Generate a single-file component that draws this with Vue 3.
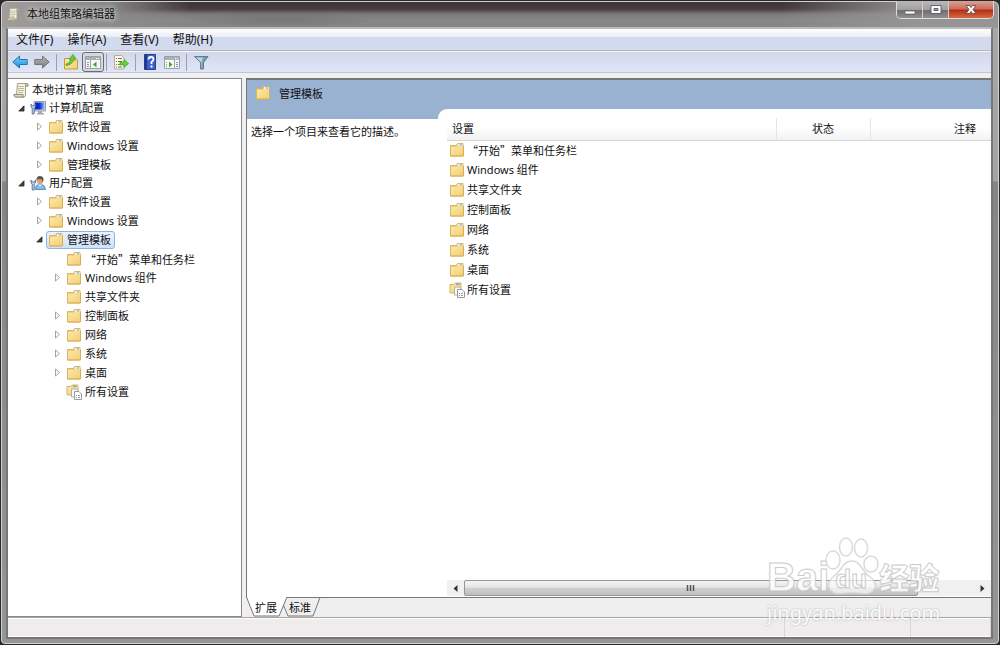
<script setup>
const menus = ['文件(F)', '操作(A)', '查看(V)', '帮助(H)']

const tree = [
  { text: '本地计算机 策略', level: 0, icon: 'scroll', arrow: 'none' },
  { text: '计算机配置', level: 1, icon: 'computer', arrow: 'open' },
  { text: '软件设置', level: 2, icon: 'folder', arrow: 'closed' },
  { text: 'Windows 设置', level: 2, icon: 'folder', arrow: 'closed' },
  { text: '管理模板', level: 2, icon: 'folder', arrow: 'closed' },
  { text: '用户配置', level: 1, icon: 'user', arrow: 'open' },
  { text: '软件设置', level: 2, icon: 'folder', arrow: 'closed' },
  { text: 'Windows 设置', level: 2, icon: 'folder', arrow: 'closed' },
  { text: '管理模板', level: 2, icon: 'folder', arrow: 'open', selected: true },
  { text: '“开始”菜单和任务栏', level: 3, icon: 'folder', arrow: '', quoted: true },
  { text: 'Windows 组件', level: 3, icon: 'folder', arrow: 'closed' },
  { text: '共享文件夹', level: 3, icon: 'folder', arrow: '' },
  { text: '控制面板', level: 3, icon: 'folder', arrow: 'closed' },
  { text: '网络', level: 3, icon: 'folder', arrow: 'closed' },
  { text: '系统', level: 3, icon: 'folder', arrow: 'closed' },
  { text: '桌面', level: 3, icon: 'folder', arrow: 'closed' },
  { text: '所有设置', level: 3, icon: 'all', arrow: '' },
]

const items = tree.filter((n) => n.level === 3)
</script>

<template>
  <svg class="defs" aria-hidden="true">
    <defs>
      <linearGradient id="gFolder" x1="0" y1="0" x2="1" y2="1">
        <stop offset="0" stop-color="#fde9a6" />
        <stop offset="1" stop-color="#f2cf78" />
      </linearGradient>
      <linearGradient id="gBlue" x1="0" y1="0" x2="0" y2="1">
        <stop offset="0" stop-color="#7fd4f8" />
        <stop offset="1" stop-color="#1b8fd8" />
      </linearGradient>
      <linearGradient id="gGrey" x1="0" y1="0" x2="0" y2="1">
        <stop offset="0" stop-color="#b5b5b5" />
        <stop offset="1" stop-color="#7c7c7c" />
      </linearGradient>
      <linearGradient id="gScreen" x1="0" y1="0" x2="1" y2="0">
        <stop offset="0" stop-color="#0a1cb8" />
        <stop offset=".5" stop-color="#1030d8" />
        <stop offset="1" stop-color="#8fc0f4" />
      </linearGradient>
      <symbol id="folder" viewBox="0 0 16 16">
        <path d="M1.500 3.500h6l1-2h5.500v12.500h-12.500z" fill="#f0cf7c" stroke="#d9b564" />
        <path d="M9 2h4.500v2H9z" fill="#fdf9ea" />
        <path d="M10.500 2.500h2.500v1h-2.500z" fill="#5aa2dc" />
        <path d="M2 5h6l1-1h5v9.500H2z" fill="url(#gFolder)" />
        <path d="M14.500 3.500v10.500H1.500" fill="none" stroke="#d8af59" />
      </symbol>
      <symbol id="all" viewBox="0 0 16 16">
        <path d="M1 2.500h4l1-1.500h6v10H1z" fill="url(#gFolder)" stroke="#d9b564" />
        <path d="M7 1.500h3.500v1.500H7z" fill="#6eaade" />
        <path d="M5.500 5h5l2 2v6h-7z" fill="#f8f8f8" stroke="#b0b0b0" />
        <path d="M8.500 7.500h4.500l2.500 2.500v5.500h-7z" fill="#fff" stroke="#999" />
        <path d="M10 11.500h1m1 0h2m-4 2h1m1 0h2" stroke="#999" />
      </symbol>
      <symbol id="scroll" viewBox="0 0 16 16">
        <path d="M4.500 1.500h9q2 0 1.500 2.500h-2.500v9q0 2-2 2h-8q-2-.500-1.500-2.500h2.500z" fill="#f6f2dd" stroke="#a29f8b" />
        <path d="M4 12.500h6q0 2 1 2.500H2.500q-1.500-.5-1.500-2.500z" fill="#e4dcb9" stroke="#918e7c" />
        <path d="M5 4.500h6m-6 2h6m-6 2h6m-6 2h5" stroke="#bcb8a1" />
        <path d="M12.500 4V2.500q0-1 1.200-1 1.500.3 1.300 2.500z" fill="#d3ccb0" stroke="#96927e" />
      </symbol>
      <symbol id="computer" viewBox="0 0 16 16">
        <path d="M4 1.500h11.500v9.500H4z" fill="#d9dadb" stroke="#9b9da0" />
        <path d="M5 2.500h9.500v7H5z" fill="url(#gScreen)" />
        <path d="M8 11h4v2h2v1.500H7V13h1z" fill="#a9aaac" />
        <path d="M1 4v3l1.200 1v6h2V8L5.500 7V4L4 6H2.500z" fill="#b5d1ea" stroke="#426a98" stroke-width=".8" />
      </symbol>
      <symbol id="user" viewBox="0 0 16 16">
        <path d="M5.500 14.500q-.5-4.500 3-5h3q3.500.5 4 5z" fill="#89bbe3" stroke="#5c91bd" />
        <path d="M8 9.500l2 2 2-2z" fill="#fff" />
        <ellipse cx="10" cy="5.500" rx="3" ry="4" fill="#d9a27a" />
        <path d="M6.500 6Q6 1 10 1q4.500.3 3.300 5L12 7V4.500L8 4z" fill="#62554a" />
        <path d="M1 5v3l1.200 1v6h2V9l1.300-1V5L4 7H2.500z" fill="#b5d1ea" stroke="#426a98" stroke-width=".8" />
      </symbol>
    </defs>
  </svg>

  <div class="window">
    <header class="title">
      <svg class="ico"><use href="#scroll" /></svg>
      <h1>本地组策略编辑器</h1>
      <div class="captions">
        <button class="cap min" aria-label="最小化">
          <svg width="14" height="12" viewBox="0 0 14 12"><path d="M2 7h10v3H2z" fill="#fff" stroke="#555a66" stroke-width=".7" /></svg>
        </button>
        <button class="cap max" aria-label="最大化">
          <svg width="14" height="12" viewBox="0 0 14 12"><path d="M2 1.500h10v8H2zM5 4.500v2h4v-2z" fill="#fff" fill-rule="evenodd" stroke="#555a66" stroke-width=".9" /></svg>
        </button>
        <button class="cap close" aria-label="关闭">
          <svg width="14" height="12" viewBox="0 0 14 12"><path d="M2 1.500h3.500L7 3.500l1.500-2H12L9 5.500l3 4H8.500L7 7.500l-1.500 2H2l3-4z" fill="#fff" stroke="#5e4850" stroke-width=".9" /></svg>
        </button>
      </div>
    </header>

    <main class="client">
      <nav class="menubar">
        <button v-for="m in menus" :key="m">{{ m }}</button>
      </nav>

      <div class="toolbar">
        <button aria-label="后退">
          <svg class="ico" viewBox="0 0 16 16"><path d="M.8 8L7.500 2v3.500h7.700v5H7.500V14z" fill="url(#gBlue)" stroke="#2575ad" /></svg>
        </button>
        <button aria-label="前进">
          <svg class="ico" viewBox="0 0 16 16"><path d="M15.200 8L8.500 2v3.500H.8v5h7.700V14z" fill="url(#gGrey)" stroke="#777" /></svg>
        </button>
        <i class="sep"></i>
        <button aria-label="上一级">
          <svg class="ico" viewBox="0 0 16 16">
            <path d="M1.500 4.500h5l1 1.500h7v9h-13z" fill="url(#gFolder)" stroke="#c69c40" />
            <path d="M3 10q4-.5 5-5H6l4-4.500L13 5h-2q-1 5.500-8 6.500z" fill="#63ce37" stroke="#3b9d22" stroke-width=".7" />
          </svg>
        </button>
        <button class="pressed" aria-label="显示控制台树">
          <svg class="ico" viewBox="0 0 16 16">
            <path d="M.5 2.500h15v12H.5z" fill="#f8f8f8" stroke="#9aa0a7" />
            <path d="M1 3h14v3H1z" fill="#aab0b8" /><path d="M11 4.500h1m1 0h1" stroke="#fff" />
            <path d="M5.500 6v8.500" stroke="#9a9fa6" /><path d="M2 8.500h2m-2 2h2m-2 2h2" stroke="#8595a7" />
            <path d="M11.500 7.500v6L8 10.500z" fill="#2fae24" />
          </svg>
        </button>
        <i class="sep"></i>
        <button aria-label="导出列表">
          <svg class="ico" viewBox="0 0 16 16">
            <path d="M1.500 1.500h7l2.500 2.500v11H1.500z" fill="#fbf8e9" stroke="#b6ae90" />
            <path d="M3 4.500h1m1 0h4m-6 3h1m1 0h4m-6 3h1m1 0h3m-5 2.500h1m1 0h4" stroke="#777564" />
            <path d="M7 8h4V5.500L15.500 9.500 11 13.500V11H7z" fill="#65d23b" stroke="#40a82a" stroke-width=".7" />
          </svg>
        </button>
        <i class="sep"></i>
        <button aria-label="帮助">
          <svg class="ico" viewBox="0 0 16 16">
            <path d="M2.500.5h11v15h-11z" fill="#3d62c9" stroke="#27408c" /><path d="M3 1h2v14H3z" fill="#203a91" />
            <path d="M6.500 5.500Q6.500 3 9 3t2.500 2.300Q11.500 7 9.500 8v2" fill="none" stroke="#fff" stroke-width="1.800" />
            <path d="M8.500 11.500h2v2h-2z" fill="#fff" />
          </svg>
        </button>
        <button aria-label="显示操作窗格">
          <svg class="ico" viewBox="0 0 16 16">
            <path d="M.5 2.500h15v12H.5z" fill="#f8f8f8" stroke="#9aa0a7" />
            <path d="M1 3h14v3H1z" fill="#aab0b8" /><path d="M11 4.500h1m1 0h1" stroke="#fff" />
            <path d="M10.500 6v8.500" stroke="#9a9fa6" /><path d="M12 8.500h2m-2 2h2m-2 2h2M2 8.500h1m-1 2h1m-1 2h1" stroke="#8595a7" />
            <path d="M5 7.500v6l3.500-3z" fill="#2fae24" />
          </svg>
        </button>
        <i class="sep"></i>
        <button aria-label="筛选">
          <svg class="ico" viewBox="0 0 16 16">
            <path d="M1.500 2.500h13.500L10.500 8.500V15h-3V8.500z" fill="#7f9db0" stroke="#5c7d92" />
            <path d="M3 3.500h7L8.500 8v6L8 13V8z" fill="#c4d5de" />
          </svg>
        </button>
      </div>

      <div class="body">
        <aside class="tree">
          <ul>
            <li v-for="(n, i) in tree" :key="i" :class="['node', 'l' + n.level, { sel: n.selected }]">
              <span v-if="n.level" class="arrow">
                <svg v-if="n.arrow === 'open'" width="7" height="7" viewBox="0 0 7 7"><path d="M6 .8V6H.8z" fill="#444" stroke="#222" stroke-width=".8" /></svg>
                <svg v-if="n.arrow === 'closed'" width="7" height="9" viewBox="0 0 7 9"><path d="M1.500 1v7l4-3.500z" fill="#fff" stroke="#a3a3a3" /></svg>
              </span>
              <span class="label">
                <svg class="ico"><use :href="'#' + n.icon" /></svg>
                <span :class="{ quoted: n.quoted }">{{ n.text }}</span>
              </span>
            </li>
          </ul>
        </aside>

        <section class="right">
          <div class="pane">
            <div class="band">
              <svg class="ico"><use href="#folder" /></svg>
              <h2>管理模板</h2>
            </div>
            <div class="split">
              <p class="desc">选择一个项目来查看它的描述。</p>
              <div class="listwrap">
                <div class="list">
                  <table>
                    <colgroup><col /><col class="c-state" /><col class="c-note" /></colgroup>
                    <thead>
                      <tr><th>设置</th><th class="mid">状态</th><th class="note">注释</th></tr>
                    </thead>
                    <tbody>
                      <tr v-for="n in items" :key="n.text">
                        <td>
                          <span class="cell">
                            <svg class="ico"><use :href="'#' + n.icon" /></svg>
                            <span :class="{ quoted: n.quoted }">{{ n.text }}</span>
                          </span>
                        </td>
                        <td></td>
                        <td></td>
                      </tr>
                    </tbody>
                  </table>
                  <div class="scroll">
                    <button aria-label="向左滚动"><svg width="5" height="7" viewBox="0 0 5 7"><path d="M4.500 0v7L.5 3.500z" fill="#333" /></svg></button>
                    <div class="track">
                      <div class="thumb"><svg width="9" height="7" viewBox="0 0 9 7"><path d="M1.500 0v6m3-6v6m3-6v6" stroke="#555" stroke-width="1.500" /></svg></div>
                    </div>
                    <button aria-label="向右滚动"><svg width="5" height="7" viewBox="0 0 5 7"><path d="M.5 0v7l4-3.500z" fill="#333" /></svg></button>
                  </div>
                </div>
              </div>
            </div>
          </div>
          <div class="tabs">
            <svg class="tabshape" width="76" height="20" viewBox="0 0 76 20">
              <path d="M39 .5L42 19h25L74 .5" fill="#efefef" />
              <path d="M37 7l5 12h25L74 .5" fill="none" stroke="#777" />
              <path d="M.5 0l7.500 19h25L41 0z" fill="#fff" />
              <path d="M.5 0l7.500 19h25L41 0" fill="none" stroke="#777" />
              <path d="M41 .5h35" stroke="#777" />
            </svg>
            <button>扩展</button>
            <button>标准</button>
          </div>
        </section>
      </div>

      <footer class="status"><span></span><span></span><span></span></footer>
    </main>

    <div class="watermark">
      <div class="brand">
        <span class="bai">Bai</span>
        <span class="paw">
          <svg width="54" height="60" viewBox="0 0 54 60">
            <g fill="#fff" fill-opacity=".75" stroke="#d4d4d4" stroke-width="1.500">
              <ellipse cx="8" cy="24" rx="7" ry="9" />
              <ellipse cx="21" cy="11" rx="6.500" ry="9" />
              <ellipse cx="36" cy="12" rx="6.500" ry="9" />
              <ellipse cx="46" cy="28" rx="7" ry="8" />
              <path d="M27 25q-7 0-11 8-3 4-9 9-6 6-2 12 3 4 10 4 12-2 24 0 9 0 11-6 2-6-5-11-5-4-8-9-4-7-10-7z" />
            </g>
          </svg>
          <b>du</b>
        </span>
        <span class="jy">经验</span>
      </div>
      <div class="url">jingyan.baidu.com</div>
    </div>
  </div>
</template>

<style>
html, body { margin: 0; background: #2a282b; }
</style>

<style scoped>
* { box-sizing: border-box; }
.defs { position: absolute; width: 0; height: 0; }
.window {
  position: relative;
  display: flex;
  flex-direction: column;
  height: 100vh;
  padding: 0 6px 5px 5px;
  border: 1px solid #2b282c;
  border-radius: 7px 7px 5px 5px;
  box-shadow: inset 0 0 0 1px #d2d2d2;
  font: 11px/16px "Noto Sans", "Noto Sans CJK SC", sans-serif;
  color: #111;
  overflow: hidden;
  background:
    radial-gradient(ellipse 100px 8px at 280px 19px, #68686888, transparent),
    linear-gradient(90deg, #a09e9d 0, #8c8a8aee 110px, #8c8a8a00 190px) 0 0 / 100% 27px no-repeat,
    linear-gradient(90deg, transparent 780px, #969494 920px) 0 0 / 100% 27px no-repeat,
    linear-gradient(#3b3137 0, #453c41 8px, #7b7878 13px, #888685 18px, #888685 27px) 0 0 / 100% 27px no-repeat,
    linear-gradient(#a9a7a6 0, #a6a4a3 180px, #858585 181px, #949698 100%);
}
button { font: inherit; color: inherit; padding: 0; margin: 0; border: 0; background: none; }
h1, h2, p, ul { margin: 0; padding: 0; font: inherit; list-style: none; }
svg { display: block; flex: none; }
.ico { width: 16px; height: 16px; }

.title { display: flex; align-items: center; height: 26px; flex: none; gap: 7px; }
.title .ico { width: 14px; height: 14px; }
.title h1 { flex: 1; text-shadow: 0 0 5px #ddd, 0 0 7px #ccc; }
.captions { display: flex; align-self: flex-start; height: 18px; border: 1px solid #ddd; border-top: 0; border-radius: 0 0 5px 5px; overflow: hidden; margin-right: -1px; }
.cap { display: flex; align-items: center; justify-content: center; width: 26px; background: linear-gradient(#b9b7b7 0, #a29fa0 50%, #6e6b6d 52%, #918f90 100%); border-right: 1px solid #d0d0d0; }
.cap.close { width: 44px; border: 0; background: linear-gradient(#d9a294 0, #c96c59 48%, #b32c14 52%, #d66a40 100%); }

.client { flex: 1; min-height: 0; display: flex; flex-direction: column; border: 2px solid #777; border-top-color: #bbb; background: #f0f0f0; }
.menubar { display: flex; flex: none; gap: 14px; height: 22px; padding: 0 8px; font-size: 12px; border-bottom: 1px solid #b5b5b8; background: linear-gradient(#fff 0, #e9edf5 8px, #d4daed 8px, #d4daed 100%); }
.toolbar { display: flex; flex: none; align-items: center; height: 22px; padding-left: 4px; border-top: 1px solid #f5f5f8; border-bottom: 1px solid #c0c5d5; background: linear-gradient(#d2d8eb, #e0e6f7); }
.toolbar button { margin-right: 6px; }
.toolbar .sep { width: 1px; height: 17px; margin-right: 6px; background: #9da1ad; }
.toolbar .pressed { padding: 1px 2px; margin: 0 2px 0 -3px; border: 1px solid #666b75; border-radius: 3px; background: #d5d8de; }

.body { flex: 1; min-height: 0; display: flex; gap: 4px; padding-top: 5px; }
.tree { flex: none; width: 234px; border: 1px solid #85898f; border-left: 0; background: #fff; padding-top: 2px; }
.node { display: flex; align-items: center; height: 19px; white-space: nowrap; }
.l0 { height: 18px; padding-left: 3px; }
.l1 { height: 18px; padding-left: 10px; }
.l2 { padding-left: 28px; }
.l3 { padding-left: 46px; }
.arrow { display: flex; width: 10px; justify-content: flex-start; }
.label { display: flex; align-items: center; gap: 3px; height: 18px; padding: 0 3px 0 1px; border: 1px solid transparent; border-radius: 3px; }
.sel .label { border-color: #8fb4e4; background: linear-gradient(#eaf3fd, #cfe2fa); }
.quoted { font-family: "Noto Sans CJK SC", sans-serif; }

.right { flex: 1; min-width: 0; display: flex; flex-direction: column; }
.pane { flex: 1; min-height: 0; display: flex; flex-direction: column; border: 2px solid #777; border-width: 2px 0 1px 1px; background: #fff; }
.band { display: flex; flex: none; align-items: center; gap: 8px; height: 29px; padding: 0 8px; background: #99b2d1; }
.band .ico { margin-top: -3px; }
.band h2 { margin-top: -2px; }
.split { flex: 1; min-height: 0; display: flex; background: linear-gradient(#99b2d1 10px, #fff 10px); }
.desc { flex: none; width: 191px; padding: 15px 4px 0; white-space: nowrap; }
.listwrap { flex: 1; min-width: 0; display: flex; padding: 9px 0 1px 9px; background: #fff; border-top-left-radius: 9px; }
.list { flex: 1; min-width: 0; display: flex; flex-direction: column; }
table { width: 100%; table-layout: fixed; border-collapse: collapse; }
.c-state { width: 94px; }
.c-note { width: 121px; }
th { height: 22px; padding: 0 5px; text-align: left; font-weight: normal; background: linear-gradient(#fff 40%, #f1f2f4); border-bottom: 1px solid #d5d5d5; border-right: 1px solid #e3e5e8; }
th.mid { text-align: center; }
th.note { text-align: right; padding-right: 15px; border-right: 0; }
td { height: 20px; padding: 0 2px; }
.cell { display: flex; align-items: center; gap: 2px; white-space: nowrap; }
.scroll { display: flex; flex: none; height: 16px; margin-top: auto; background: #f0f0f0; }
.scroll button { display: flex; align-items: center; justify-content: center; width: 17px; flex: none; }
.track { flex: 1; display: flex; }
.thumb { display: flex; align-items: center; justify-content: center; width: 89%; border: 1px solid #969696; border-radius: 2px; background: linear-gradient(#f4f4f4 0, #e5e5e6 45%, #cfd0d2 50%, #bebfc2 100%); }

.tabs { position: relative; display: flex; flex: none; gap: 10px; height: 19px; padding-left: 8px; background: #efefef; }
.tabshape { position: absolute; left: 0; top: -1px; }
.tabs button { position: relative; width: 24px; white-space: nowrap; }

.status { display: flex; flex: none; justify-content: flex-end; height: 20px; border-top: 1px solid #a5a5a8; background: #f0ecec; box-shadow: inset 0 1px #fff, inset 0 -1px #fff; }
.status span { width: 126px; border-left: 1px solid #d9d6d6; }
.status span:nth-child(2) { width: 80px; }
.status span:last-child { width: 1px; }

.watermark { position: absolute; right: 52px; bottom: 18px; width: 180px; pointer-events: none; opacity: .85; }
.brand { display: flex; align-items: flex-end; height: 60px; color: #fff; font: bold 40px/38px "Liberation Sans", sans-serif; -webkit-text-stroke: 1px #c4c4c4; }
.paw { position: relative; margin-left: -4px; }
.paw b { position: absolute; left: 10px; bottom: 3px; font-size: 26px; line-height: 28px; }
.jy { padding-bottom: 2px; font: 900 30px/36px "Noto Sans CJK SC", sans-serif; }
.url { padding-top: 4px; color: #fff; font: 20px/26px "Noto Sans", sans-serif; text-shadow: 0 0 2px #999; }
</style>
